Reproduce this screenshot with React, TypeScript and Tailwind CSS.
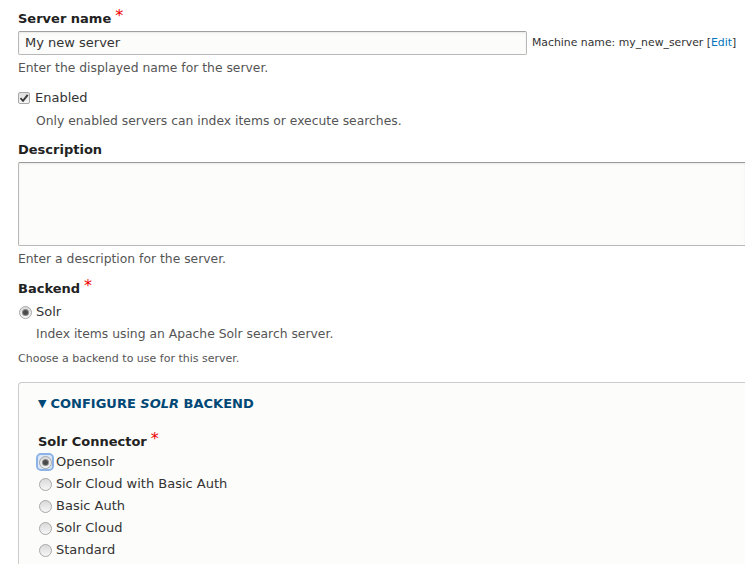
import React from 'react';

const font = { fontFamily: '"DejaVu Sans", Verdana, sans-serif' };

const Required = () => <span className="ml-[4px] text-[#e00] font-normal text-[16px] leading-none relative top-[-3px]">*</span>;

const Radio = ({ checked, focused }: { checked?: boolean; focused?: boolean }) => (
  <span
    className={`flex items-center justify-center w-[14px] h-[14px] shrink-0 ${
      focused ? 'rounded-[3px] outline outline-2 outline-[#8cb3e6] bg-[#dce8f7]' : ''
    }`}
  >
    <span className="flex items-center justify-center w-[13px] h-[13px] rounded-full border border-[#a8a8a8] bg-gradient-to-b from-[#d9d9d9] to-[#f7f7f7]">
      {checked && <span className="w-[5px] h-[5px] rounded-full bg-[#4a4a4a] shadow-[0_0_0_1px_#8a8a8a]" />}
    </span>
  </span>
);

const Checkbox = () => (
  <span className="flex items-center justify-center w-[12px] h-[12px] rounded-[2px] border border-[#a8a8a8] bg-gradient-to-b from-[#dedede] to-[#f7f7f7] shrink-0">
    <svg width="10" height="10" viewBox="0 0 10 10">
      <path d="M1.5 5.2 L4 7.8 L8.7 1.8" fill="none" stroke="#3a3a3a" strokeWidth="1.9" />
    </svg>
  </span>
);

const connectors = ['Opensolr', 'Solr Cloud with Basic Auth', 'Basic Auth', 'Solr Cloud', 'Standard'];

export default function App() {
  return (
    <div className="w-[745px] h-[564px] overflow-hidden bg-white text-[#333] pl-[18px]" style={font}>
      <div className="pt-[9px] h-[29px] text-[13px] leading-[20px] font-bold text-[#222] flex items-center">
        Server name<Required />
      </div>
      <div className="mt-[2px] flex items-center">
        <div className="w-[509px] h-[24px] border border-[#b8b8b8] border-t-[#a0a0a0] rounded-[2px] bg-[#fcfcfa] px-[6px] flex items-center text-[13px] text-[#333] shadow-[inset_0_1px_2px_rgba(0,0,0,0.08)]">
          My new server
        </div>
        <span className="ml-[5px] text-[10.85px] text-[#333]">
          Machine name: my_new_server [<span className="text-[#0074bd]">Edit</span>]
        </span>
      </div>
      <div className="mt-[4px] text-[12.35px] leading-[18px] text-[#555]">Enter the displayed name for the server.</div>

      <div className="mt-[11px] h-[20px] flex items-center gap-[5px]">
        <Checkbox />
        <span className="text-[13px]">Enabled</span>
      </div>
      <div className="mt-[4px] pl-[18px] text-[12.35px] leading-[18px] text-[#555]">
        Only enabled servers can index items or execute searches.
      </div>

      <div className="mt-[10px] h-[20px] text-[13px] leading-[20px] font-bold text-[#222]">Description</div>
      <div className="mt-[2px] h-[84px] border border-[#b8b8b8] border-t-[#999] rounded-l-[2px] bg-[#fcfcfa] border-r-0 shadow-[inset_0_1px_2px_rgba(0,0,0,0.08)]" />
      <div className="mt-[4px] text-[12.35px] leading-[18px] text-[#555]">Enter a description for the server.</div>

      <div className="mt-[11px] h-[20px] text-[13px] leading-[20px] font-bold text-[#222] flex items-center">
        Backend<Required />
      </div>
      <div className="mt-[3px] h-[20px] flex items-center gap-[5px]">
        <Radio checked />
        <span className="text-[13px] -ml-[1px]">Solr</span>
      </div>
      <div className="mt-[3px] pl-[18px] text-[12.35px] leading-[18px] text-[#555]">
        Index items using an Apache Solr search server.
      </div>
      <div className="mt-[8px] text-[11px] leading-[16px] text-[#555]">Choose a backend to use for this server.</div>

      <div className="mt-[15px] border border-[#ccc] border-r-0 rounded-tl-[4px] bg-[#fcfcfa] pl-[19px] pt-[12px] h-[200px]">
        <div className="h-[18px] flex items-center text-[13px] font-bold text-[#004875]">
          <span className="text-[11px] mr-[4px]">▼</span>
          CONFIGURE&nbsp;<span className="italic">SOLR</span>&nbsp;BACKEND
        </div>
        <div className="mt-[19px] h-[20px] text-[13px] leading-[20px] font-bold text-[#222] flex items-center">
          Solr Connector<Required />
        </div>
        <div className="-mt-[1px] flex flex-col">
          {connectors.map((c, i) => (
            <div key={c} className="h-[22px] flex items-center gap-[5px]">
              <Radio checked={i === 0} focused={i === 0} />
              <span className="text-[13px] -ml-[1px]">{c}</span>
            </div>
          ))}
        </div>
      </div>
    </div>
  );
}
